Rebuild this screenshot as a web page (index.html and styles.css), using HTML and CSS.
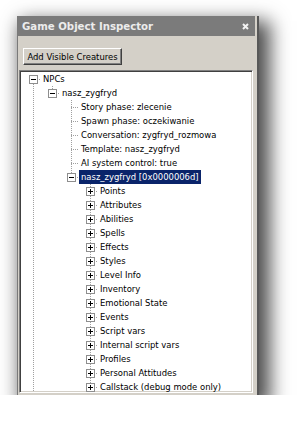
FILE: index.html
```html
<!DOCTYPE html>
<html lang="en">
<head>
  <meta charset="UTF-8">
  <title>Game Object Inspector</title>
  <link rel="stylesheet" href="styles.css">
</head>
<body>
  <div class="window">
    <div class="titlebar">
      <span>Game Object Inspector</span>
      <svg class="close" width="7" height="7" viewBox="0 0 7 7"><path d="M1 1L6 6M6 1L1 6" stroke="#f2f2f2" stroke-width="2"/></svg>
    </div>
    <div class="toolbar">
      <button class="btn">Add Visible Creatures</button>
    </div>
    <div class="tree">
      <div class="row"><span class="node root"><span class="box minus"></span></span><span class="label">NPCs</span></div>
      <div class="row"><span class="guide line"></span><span class="node last"><span class="box minus"></span></span><span class="label">nasz_zygfryd</span></div>
      <div class="row"><span class="guide line"></span><span class="guide"></span><span class="node tee"></span><span class="label">Story phase: zlecenie</span></div>
      <div class="row"><span class="guide line"></span><span class="guide"></span><span class="node tee"></span><span class="label">Spawn phase: oczekiwanie</span></div>
      <div class="row"><span class="guide line"></span><span class="guide"></span><span class="node tee"></span><span class="label">Conversation: zygfryd_rozmowa</span></div>
      <div class="row"><span class="guide line"></span><span class="guide"></span><span class="node tee"></span><span class="label">Template: nasz_zygfryd</span></div>
      <div class="row"><span class="guide line"></span><span class="guide"></span><span class="node tee"></span><span class="label">AI system control: true</span></div>
      <div class="row"><span class="guide line"></span><span class="guide"></span><span class="node last"><span class="box minus"></span></span><span class="label sel">nasz_zygfryd [0x0000006d]</span></div>
      <div class="row"><span class="guide line"></span><span class="guide"></span><span class="guide"></span><span class="node tee"><span class="box plus"></span></span><span class="label">Points</span></div>
      <div class="row"><span class="guide line"></span><span class="guide"></span><span class="guide"></span><span class="node tee"><span class="box plus"></span></span><span class="label">Attributes</span></div>
      <div class="row"><span class="guide line"></span><span class="guide"></span><span class="guide"></span><span class="node tee"><span class="box plus"></span></span><span class="label">Abilities</span></div>
      <div class="row"><span class="guide line"></span><span class="guide"></span><span class="guide"></span><span class="node tee"><span class="box plus"></span></span><span class="label">Spells</span></div>
      <div class="row"><span class="guide line"></span><span class="guide"></span><span class="guide"></span><span class="node tee"><span class="box plus"></span></span><span class="label">Effects</span></div>
      <div class="row"><span class="guide line"></span><span class="guide"></span><span class="guide"></span><span class="node tee"><span class="box plus"></span></span><span class="label">Styles</span></div>
      <div class="row"><span class="guide line"></span><span class="guide"></span><span class="guide"></span><span class="node tee"><span class="box plus"></span></span><span class="label">Level Info</span></div>
      <div class="row"><span class="guide line"></span><span class="guide"></span><span class="guide"></span><span class="node tee"><span class="box plus"></span></span><span class="label">Inventory</span></div>
      <div class="row"><span class="guide line"></span><span class="guide"></span><span class="guide"></span><span class="node tee"><span class="box plus"></span></span><span class="label">Emotional State</span></div>
      <div class="row"><span class="guide line"></span><span class="guide"></span><span class="guide"></span><span class="node tee"><span class="box plus"></span></span><span class="label">Events</span></div>
      <div class="row"><span class="guide line"></span><span class="guide"></span><span class="guide"></span><span class="node tee"><span class="box plus"></span></span><span class="label">Script vars</span></div>
      <div class="row"><span class="guide line"></span><span class="guide"></span><span class="guide"></span><span class="node tee"><span class="box plus"></span></span><span class="label">Internal script vars</span></div>
      <div class="row"><span class="guide line"></span><span class="guide"></span><span class="guide"></span><span class="node tee"><span class="box plus"></span></span><span class="label">Profiles</span></div>
      <div class="row"><span class="guide line"></span><span class="guide"></span><span class="guide"></span><span class="node tee"><span class="box plus"></span></span><span class="label">Personal Attitudes</span></div>
      <div class="row"><span class="guide line"></span><span class="guide"></span><span class="guide"></span><span class="node last"><span class="box plus"></span></span><span class="label">Callstack (debug mode only)</span></div>
    </div>
  </div>
</body>
</html>
```

FILE: styles.css
```css
/* Base */
body {
  margin: 0;
  background: #fff;
  color: #000;
  font-family: "DejaVu Sans Condensed", "DejaVu Sans", sans-serif;
  font-stretch: condensed;
  font-size: 9.4px;
}

/* Window frame */
.window {
  margin: 16px 0 0 17px;
  width: 242px;
  height: 379px;
  box-sizing: border-box;
  display: flex;
  flex-direction: column;
  background: #d4d0c8;
  border-left: 1px solid #7a7a7a;
  border-right: 2px solid #585858;
  padding: 0 2px 2px 0;
  box-shadow: 7px 9px 18px 4px rgba(0,0,0,0.7);
}
.titlebar {
  flex: none;
  height: 20px;
  display: flex;
  align-items: center;
  justify-content: space-between;
  padding: 0 6px 0 4px;
  background: #7b7b7b;
  color: #ececec;
  font-weight: bold;
  font-size: 11.3px;
}
.close {
  display: block;
}
.toolbar {
  flex: none;
  padding: 12px 0 5px 5px;
}
.btn {
  display: block;
  width: 99px;
  height: 17px;
  margin: 0;
  padding: 0;
  font: inherit;
  color: #000;
  background: #d4d0c8;
  border: 1px solid;
  border-color: #fff #404040 #404040 #fff;
  box-shadow: inset -1px -1px 0 #808080;
}

/* Tree view */
.tree {
  flex: 1;
  margin: 0 2px 0 1px;
  padding: 1px;
  overflow: hidden;
  background: #fff;
  border: 1px solid;
  border-color: #808080 #fff #fff #808080;
  box-shadow: inset 1px 1px 0 #404040, inset -1px -1px 0 #d4d0c8;
}
.row {
  display: flex;
  height: 14px;
  white-space: nowrap;
}
.guide, .node {
  flex: none;
  width: 19px;
  height: 14px;
  box-sizing: border-box;
  --v: repeating-linear-gradient(#a0a0a0 0 1px, transparent 1px 2px);
  --h: repeating-linear-gradient(90deg, #a0a0a0 0 1px, transparent 1px 2px);
}
.node {
  padding-top: 3px;
}
.guide.line {
  background: var(--v) 12px 0 / 1px 14px no-repeat;
}
.node.tee {
  background: var(--v) 12px 0 / 1px 14px no-repeat, var(--h) 12px 7px / 8px 1px no-repeat;
}
.node.last {
  background: var(--v) 12px 0 / 1px 7px no-repeat, var(--h) 12px 7px / 8px 1px no-repeat;
}
.node.root {
  background: var(--v) 12px 8px / 1px 6px no-repeat, var(--h) 12px 7px / 8px 1px no-repeat;
}
.box {
  display: block;
  width: 9px;
  height: 9px;
  margin-left: 8px;
  box-sizing: border-box;
  border: 1px solid #8e8e8e;
}
.box.minus {
  background: linear-gradient(#000, #000) 50% 50% / 5px 1px no-repeat, #fff;
}
.box.plus {
  background: linear-gradient(#000, #000) 50% 50% / 5px 1px no-repeat, linear-gradient(#000, #000) 50% 50% / 1px 5px no-repeat, #fff;
}
.label {
  margin-left: 1px;
  padding: 0 2px;
  line-height: 14px;
}
.label.sel {
  background: #0a246a;
  color: #fff;
}
```
